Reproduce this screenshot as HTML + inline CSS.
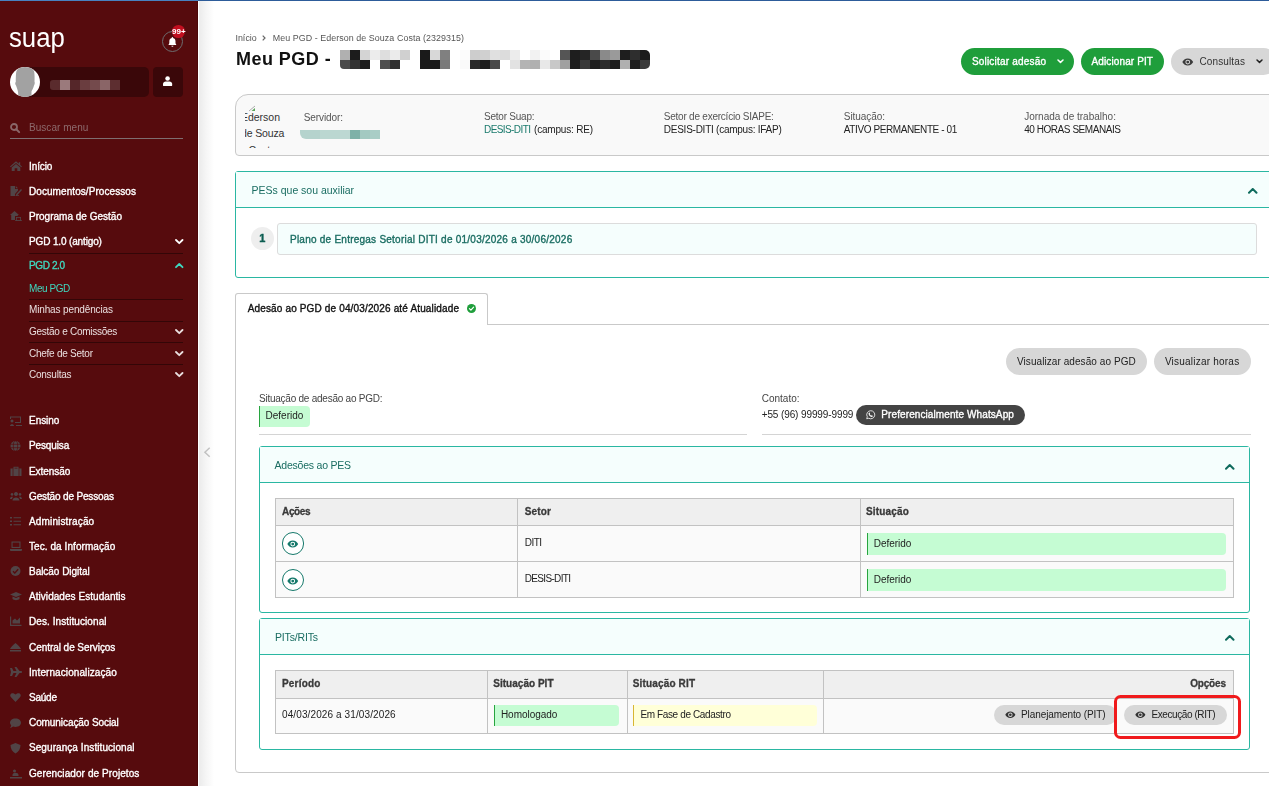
<!DOCTYPE html>
<html lang="pt-br">
<head>
<meta charset="utf-8">
<title>Meu PGD - SUAP</title>
<style>
*{box-sizing:border-box;margin:0;padding:0}
html,body{width:1269px;height:786px;overflow:hidden;background:#fff}
body{font-family:"Liberation Sans","DejaVu Sans",sans-serif;font-size:11px;color:#222;position:relative}
.a{position:absolute}
.t{position:absolute;white-space:nowrap;line-height:14px;z-index:5}
svg{position:absolute;overflow:visible}
#topline{left:0;top:0;width:1269px;height:1px;background:linear-gradient(to right,#4882c0 198px,#2d5c9a 198px);z-index:9}
#side{left:0;top:0;width:198px;height:786px;background:#560b0d;border-right:1px solid #4a0607}
#shadow{left:199px;top:0;width:15px;height:786px;background:linear-gradient(to right,#ebebeb,#f5f5f5 45%,#fff)}
.sep{position:absolute;left:29px;width:154px;height:1px;background:#330607}
.pill{position:absolute;border-radius:14px}
.panel{position:absolute;border:1px solid #2ab7a2;border-radius:3px;background:#fff}
.phead{position:absolute;left:0;top:0;right:0;background:#f5fefd;border-bottom:1px solid #2ab7a2}
.cell{position:absolute;border:1px solid #bdbdbd}
.st{position:absolute;border-radius:0 4px 4px 0}
#txt{position:absolute;left:0;top:0;width:1269px;height:786px;will-change:transform;z-index:5}

</style>
</head>
<body>
<div class="a" id="side"></div><div class="a" id="shadow"></div><div class="a" id="topline"></div>
<div class="a" style="left:162px;top:31px;width:21px;height:21px;border:1px solid #6d6e70;border-radius:50%"></div>
<svg style="left:167.700px;top:37px" width="8.800" height="9.900" viewBox="0 0 20 22"><path fill="#fff" d="M10 0c-.9 0-1.6.7-1.6 1.6v.7C5.300 3 3 5.800 3 9.200v3.600c0 1.400-.6 2.700-1.600 3.600-.5.500-.2 1.600.6 1.600h16c.8 0 1.100-1.100.6-1.600-1-.9-1.600-2.200-1.600-3.600V9.200c0-3.400-2.300-6.200-5.400-6.900v-.7C11.600.7 10.900 0 10 0zM7.600 19.500a2.400 2.400 0 0 0 4.800 0z"/></svg>
<div class="a" style="left:172.2px;top:25.2px;width:12.8px;height:12.8px;border-radius:50%;background:#c10f1f;z-index:3"></div>
<div class="a" style="left:22px;top:67px;width:127px;height:30px;background:#3a0709;border-radius:0 5px 5px 0"></div>
<div class="a" style="left:153px;top:67px;width:30px;height:30px;background:#3a0709;border-radius:4px"></div>
<div class="a" style="left:10px;top:67px;width:30px;height:30px;border-radius:50%;background:#fff;overflow:hidden"><svg style="left:0;top:0" width="30" height="30" viewBox="0 0 30 30"><path fill="#a2a2a2" d="M8.500 30 L8 25 C7.500 22 6.500 20 6 18.500 C5 17.500 5 15.500 5.800 15 C5.800 12 5.800 6 6.500 4 C8 1 11 0 15 0 C19 0 22.500 1 24 4 C24.800 7 24.600 12 24.500 14.500 C25 15.500 24.800 17.500 24 18.500 C23.500 21 22 23 21.500 24.500 L21.500 30 Z"/></svg></div>
<div class="a" style="left:50px;top:80px;width:10px;height:10px;background:#5a2b2d;border-radius:3px 0 0 3px"></div>
<div class="a" style="left:60px;top:80px;width:10px;height:10px;background:#9b7a7c;"></div>
<div class="a" style="left:70px;top:80px;width:10px;height:10px;background:#552629;"></div>
<div class="a" style="left:80px;top:80px;width:10px;height:10px;background:#6a3d3f;"></div>
<div class="a" style="left:90px;top:80px;width:10px;height:10px;background:#744a4c;"></div>
<div class="a" style="left:100px;top:80px;width:10px;height:10px;background:#8a6567;"></div>
<div class="a" style="left:110px;top:80px;width:10px;height:10px;background:#5d2e30;"></div>
<svg style="left:162.900px;top:76.300px" width="9.200" height="10.100" viewBox="0 0 20 22"><circle cx="10" cy="5.500" r="5" fill="#fff"/><path fill="#fff" d="M6 12h8c3.300 0 6 2.400 6 5.500V20c0 1.100-.9 2-2 2H2c-1.100 0-2-.9-2-2v-2.500C0 14.400 2.700 12 6 12z"/></svg>
<svg style="left:10px;top:122.5px" width="10" height="10" viewBox="0 0 20 20"><circle cx="8" cy="8" r="6" fill="none" stroke="#8a6668" stroke-width="3.600"/><line x1="12.500" y1="12.500" x2="18.300" y2="18.300" stroke="#8a6668" stroke-width="4" stroke-linecap="round"/></svg>
<div class="a" style="left:10px;top:138px;width:173px;height:1px;background:#7f6e70"></div>
<div class="sep" style="top:253px"></div>
<div class="sep" style="top:299px"></div>
<div class="sep" style="top:320.5px"></div>
<div class="sep" style="top:342px"></div>
<div class="sep" style="top:364px"></div>
<svg style="left:174.5px;top:239.2px;z-index:6" width="8.5" height="5.2"><polyline points="1,1 4.25,4.175000000000001 7.5,1" fill="none" stroke="#fff" stroke-width="1.8" stroke-linecap="round" stroke-linejoin="round"/></svg>
<svg style="left:174.5px;top:263.1px;z-index:6" width="8.5" height="5.2"><polyline points="1,4.175000000000001 4.25,1 7.5,4.175000000000001" fill="none" stroke="#3fd8bf" stroke-width="1.8" stroke-linecap="round" stroke-linejoin="round"/></svg>
<svg style="left:174.5px;top:328.9px;z-index:6" width="8.5" height="5.2"><polyline points="1,1 4.25,4.175000000000001 7.5,1" fill="none" stroke="#eadfdf" stroke-width="1.8" stroke-linecap="round" stroke-linejoin="round"/></svg>
<svg style="left:174.5px;top:350.7px;z-index:6" width="8.5" height="5.2"><polyline points="1,1 4.25,4.175000000000001 7.5,1" fill="none" stroke="#eadfdf" stroke-width="1.8" stroke-linecap="round" stroke-linejoin="round"/></svg>
<svg style="left:174.5px;top:372.1px;z-index:6" width="8.5" height="5.2"><polyline points="1,1 4.25,4.175000000000001 7.5,1" fill="none" stroke="#eadfdf" stroke-width="1.8" stroke-linecap="round" stroke-linejoin="round"/></svg>
<svg style="left:10px;top:161.0px" width="12" height="10.500" viewBox="0 0 12 10.500"><path fill="#514446" d="M6 0.300 L8.800 2.700 V1.200 H10.200 V3.900 L12 5.400 L11.300 6.300 L6 1.900 L0.700 6.300 L0 5.400 Z M6 3 L10.300 6.600 V10 H7.300 V7.200 H4.700 V10 H1.700 V6.600 Z"/></svg>
<svg style="left:10px;top:186.2px" width="12" height="10.500" viewBox="0 0 12 10.500"><path fill="#514446" d="M0.500 0 H5 V3 H8 V4.500 L5 8 V10 H0.500 Z M5.800 0 L8 2.200 H5.800 Z M11 3 L12 4 L7.500 9 L6 9.500 L6.300 8 Z M5.500 9.300 H9 V10 H5.500Z"/></svg>
<svg style="left:10px;top:211.4px" width="12" height="10.500" viewBox="0 0 12 10.500"><path fill="#514446" d="M4.500 0 L9 4 H7.800 V5 H5 V9 H1.200 V4 H0 Z M6 6 H11 V9.300 H12 V10 H5 V9.300 H6 Z"/><rect x="6.800" y="6.800" width="3.400" height="2.300" fill="#560b0d"/></svg>
<svg style="left:10px;top:415.6px" width="12" height="10.500" viewBox="0 0 12 10.500"><path fill="#514446" d="M0 0.500 H11 V7 H5 V6 H10 V1.500 H1 V3 H0 Z M2 3.500 a1.500 1.500 0 1 0 .01 0 Z M0 10 C0 7.500 4 7.500 4 10 Z M6 9 H12 V10 H6 Z"/></svg>
<svg style="left:10px;top:440.6px" width="12" height="10.500" viewBox="0 0 12 10.500"><circle cx="5.500" cy="5" r="5" fill="#514446"/><ellipse cx="5.500" cy="5" rx="2.200" ry="5" fill="none" stroke="#560b0d" stroke-width=".7"/><path d="M0.500 3.300H10.500M0.500 6.700H10.500" stroke="#560b0d" stroke-width=".7"/></svg>
<svg style="left:10px;top:465.7px" width="12" height="10.500" viewBox="0 0 12 10.500"><path fill="#514446" d="M0.500 2.500 H11.500 V10 H0.500 Z M3.500 2.500 V0.800 H8.500 V2.500 H7.500 V1.700 H4.500 V2.500 Z"/><path d="M3 2.500V10M9 2.500V10" stroke="#560b0d" stroke-width=".7"/></svg>
<svg style="left:10px;top:490.7px" width="12" height="10.500" viewBox="0 0 12 10.500"><path fill="#514446" d="M6 1 a2 2 0 1 0 .01 0 Z M2 2 a1.400 1.400 0 1 0 .01 0 Z M10 2 a1.400 1.400 0 1 0 .01 0 Z M2.500 9.500 C2.500 5.500 9.500 5.500 9.500 9.500 Z M0 8 C0 5.500 2.500 5.500 3 6 C2 7 2 8 2 8 Z M12 8 C12 5.500 9.500 5.500 9 6 C10 7 10 8 10 8 Z"/></svg>
<svg style="left:10px;top:516.2px" width="12" height="10.500" viewBox="0 0 12 10.500"><path fill="#514446" d="M0 1 H2 V2.500 H0 Z M0 4.500 H2 V6 H0 Z M0 8 H2 V9.500 H0 Z M3.500 1.200 H11 V2.300 H3.500 Z M3.500 4.700 H11 V5.800 H3.500 Z M3.500 8.200 H11 V9.300 H3.500 Z"/></svg>
<svg style="left:10px;top:541.3px" width="12" height="10.500" viewBox="0 0 12 10.500"><path fill="#514446" d="M1.500 0.500 H10.500 V7 H1.500 Z M0 8 H12 V9 C12 9.500 11.500 10 11 10 H1 C.5 10 0 9.500 0 9 Z"/><rect x="2.600" y="1.600" width="6.800" height="4.300" fill="#560b0d"/></svg>
<svg style="left:10px;top:566.3px" width="12" height="10.500" viewBox="0 0 12 10.500"><circle cx="5.500" cy="5" r="5" fill="#514446"/><polyline points="3,5.200 4.800,7 8.200,3.300" fill="none" stroke="#560b0d" stroke-width="1.300"/></svg>
<svg style="left:10px;top:591.3px" width="12" height="10.500" viewBox="0 0 12 10.500"><path fill="#514446" d="M6 1 L12 3.500 L6 6 L0 3.500 Z M2.500 5.500 L6 7 L9.500 5.500 V8 C8 9.500 4 9.500 2.500 8 Z"/></svg>
<svg style="left:10px;top:616.3px" width="12" height="10.500" viewBox="0 0 12 10.500"><path fill="#514446" d="M0 0.500 H1.200 V8.800 H11.500 V10 H0 Z M2.500 7.500 V4.500 L5 2.500 L7 4.500 L10 1.500 V7.500 Z"/></svg>
<svg style="left:10px;top:641.9px" width="12" height="10.500" viewBox="0 0 12 10.500"><path fill="#514446" d="M5.500 1 C8 3 10 5 11 7 H0 C1 5 3 3 5.500 1 Z M0 8 H11 V9.500 H0 Z"/></svg>
<svg style="left:10px;top:666.9px" width="12" height="10.500" viewBox="0 0 12 10.500"><path fill="#514446" d="M0 1 H2 L3.500 4 H6.500 L4.500 0 H6.500 L9.500 4 H11 C12.500 4 12.500 6 11 6 H9.500 L6.500 10 H4.500 L6.500 6 H3.500 L2 9 H0 L1 5 Z"/></svg>
<svg style="left:10px;top:692.4px" width="12" height="10.500" viewBox="0 0 12 10.500"><path fill="#514446" d="M5.500 10 L0.800 5 C-1 2.500 2 -0.500 5.500 2.500 C9 -0.500 12 2.500 10.200 5 Z"/></svg>
<svg style="left:10px;top:717.5px" width="12" height="10.500" viewBox="0 0 12 10.500"><path fill="#514446" d="M5.500 0.500 C9 0.500 11 2.500 11 4.800 C11 7 9 9 5.500 9 C4.500 9 3.800 8.900 3 8.600 C2 9.500 1 10 0 10 C.8 9 1.200 8 1.200 7.300 C.4 6.600 0 5.800 0 4.800 C0 2.500 2 0.500 5.500 0.500 Z"/></svg>
<svg style="left:10px;top:742.5px" width="12" height="10.500" viewBox="0 0 12 10.500"><path fill="#514446" d="M5.500 0 L10.500 2 C10.500 6 8.500 9 5.500 10.500 C2.500 9 0.500 6 0.500 2 Z"/></svg>
<svg style="left:10px;top:768.5px" width="12" height="10.500" viewBox="0 0 12 10.500"><path fill="#514446" d="M4.500 0.500 a1.500 1.500 0 1 0 .01 0 Z M2.500 6 C2.500 3 8.500 3 8.500 6 V7 H2.500 Z M0 8 H12 V9.500 H0 Z"/></svg>
<svg style="left:203.500px;top:447.400px" width="7" height="11"><polyline points="5.700,0.800 0.900,5.300 5.700,9.800" fill="none" stroke="#c2c2c2" stroke-width="1.500"/></svg>
<svg style="left:262px;top:35px" width="4" height="6"><polyline points="0.700,0.700 3,3 0.700,5.300" fill="none" stroke="#666" stroke-width="1.200"/></svg>
<div class="a" style="left:340.4px;top:49.800px;width:10px;height:9.900px;background:#b0b0b0;"></div>
<div class="a" style="left:350.4px;top:49.800px;width:10px;height:9.900px;background:#1c1c1c;"></div>
<div class="a" style="left:360.4px;top:49.800px;width:10px;height:9.900px;background:#d4d4d4;"></div>
<div class="a" style="left:370.4px;top:49.800px;width:10px;height:9.900px;background:#ececec;"></div>
<div class="a" style="left:380.4px;top:49.800px;width:10px;height:9.900px;background:#dedede;"></div>
<div class="a" style="left:390.4px;top:49.800px;width:10px;height:9.900px;background:#ebebeb;"></div>
<div class="a" style="left:400.4px;top:49.800px;width:10px;height:9.900px;background:#d0d0d0;"></div>
<div class="a" style="left:420.4px;top:49.800px;width:10px;height:9.900px;background:#1a1a1a;"></div>
<div class="a" style="left:430.4px;top:49.800px;width:10px;height:9.900px;background:#d8d8d8;"></div>
<div class="a" style="left:440.4px;top:49.800px;width:10px;height:9.900px;background:#808080;"></div>
<div class="a" style="left:460.4px;top:49.800px;width:10px;height:9.900px;background:#fcfcfc;"></div>
<div class="a" style="left:470.4px;top:49.800px;width:10px;height:9.900px;background:#cdcdcd;"></div>
<div class="a" style="left:480.4px;top:49.800px;width:10px;height:9.900px;background:#d0d0d0;"></div>
<div class="a" style="left:490.4px;top:49.800px;width:10px;height:9.900px;background:#e0e0e0;"></div>
<div class="a" style="left:500.4px;top:49.800px;width:10px;height:9.900px;background:#dcdcdc;"></div>
<div class="a" style="left:510.4px;top:49.800px;width:10px;height:9.900px;background:#ececec;"></div>
<div class="a" style="left:530.4px;top:49.800px;width:10px;height:9.900px;background:#f2f2f2;"></div>
<div class="a" style="left:540.4px;top:49.800px;width:10px;height:9.900px;background:#fbfbfb;"></div>
<div class="a" style="left:560.4px;top:49.800px;width:10px;height:9.900px;background:#555;"></div>
<div class="a" style="left:570.4px;top:49.800px;width:10px;height:9.900px;background:#1e1e1e;"></div>
<div class="a" style="left:580.4px;top:49.800px;width:10px;height:9.900px;background:#252525;"></div>
<div class="a" style="left:590.4px;top:49.800px;width:10px;height:9.900px;background:#4a4a4a;"></div>
<div class="a" style="left:600.4px;top:49.800px;width:10px;height:9.900px;background:#8a8a8a;"></div>
<div class="a" style="left:610.4px;top:49.800px;width:10px;height:9.900px;background:#9a9a9a;"></div>
<div class="a" style="left:620.4px;top:49.800px;width:10px;height:9.900px;background:#1e1e1e;"></div>
<div class="a" style="left:630.4px;top:49.800px;width:10px;height:9.900px;background:#2e2e2e;"></div>
<div class="a" style="left:640.4px;top:49.800px;width:10px;height:9.900px;background:#1c1c1c;border-radius:0 5px 0 0"></div>
<div class="a" style="left:340.4px;top:59.700px;width:10px;height:9.600px;background:#4a4a4a;border-radius:0 0 0 4px"></div>
<div class="a" style="left:350.4px;top:59.700px;width:10px;height:9.600px;background:#333;"></div>
<div class="a" style="left:360.4px;top:59.700px;width:10px;height:9.600px;background:#1c1c1c;"></div>
<div class="a" style="left:380.4px;top:59.700px;width:10px;height:9.600px;background:#4e4e4e;"></div>
<div class="a" style="left:390.4px;top:59.700px;width:10px;height:9.600px;background:#303030;"></div>
<div class="a" style="left:420.4px;top:59.700px;width:10px;height:9.600px;background:#1a1a1a;"></div>
<div class="a" style="left:430.4px;top:59.700px;width:10px;height:9.600px;background:#1a1a1a;"></div>
<div class="a" style="left:440.4px;top:59.700px;width:10px;height:9.600px;background:#7a7a7a;"></div>
<div class="a" style="left:460.4px;top:59.700px;width:10px;height:9.600px;background:#fafafa;"></div>
<div class="a" style="left:470.4px;top:59.700px;width:10px;height:9.600px;background:#2a2a2a;"></div>
<div class="a" style="left:480.4px;top:59.700px;width:10px;height:9.600px;background:#1c1c1c;"></div>
<div class="a" style="left:490.4px;top:59.700px;width:10px;height:9.600px;background:#4a4a4a;"></div>
<div class="a" style="left:510.4px;top:59.700px;width:10px;height:9.600px;background:#e2e2e2;"></div>
<div class="a" style="left:520.4px;top:59.700px;width:10px;height:9.600px;background:#b4b4b4;"></div>
<div class="a" style="left:530.4px;top:59.700px;width:10px;height:9.600px;background:#b0b0b0;"></div>
<div class="a" style="left:540.4px;top:59.700px;width:10px;height:9.600px;background:#e8e8e8;"></div>
<div class="a" style="left:550.4px;top:59.700px;width:10px;height:9.600px;background:#c8c8c8;"></div>
<div class="a" style="left:560.4px;top:59.700px;width:10px;height:9.600px;background:#a0a0a0;"></div>
<div class="a" style="left:570.4px;top:59.700px;width:10px;height:9.600px;background:#1c1c1c;"></div>
<div class="a" style="left:580.4px;top:59.700px;width:10px;height:9.600px;background:#3a3a3a;"></div>
<div class="a" style="left:590.4px;top:59.700px;width:10px;height:9.600px;background:#1e1e1e;"></div>
<div class="a" style="left:600.4px;top:59.700px;width:10px;height:9.600px;background:#2e2e2e;"></div>
<div class="a" style="left:610.4px;top:59.700px;width:10px;height:9.600px;background:#1c1c1c;"></div>
<div class="a" style="left:620.4px;top:59.700px;width:10px;height:9.600px;background:#b0b0b0;"></div>
<div class="a" style="left:630.4px;top:59.700px;width:10px;height:9.600px;background:#1e1e1e;"></div>
<div class="a" style="left:640.4px;top:59.700px;width:10px;height:9.600px;background:#3a3a3a;border-radius:0 0 5px 0"></div>
<div class="pill" style="left:960.5px;top:48px;width:113.500px;height:26.500px;background:#1f9e3b"></div>
<div class="pill" style="left:1081px;top:48px;width:83px;height:26.500px;background:#1f9e3b"></div>
<div class="pill" style="left:1171px;top:48px;width:105.500px;height:26.500px;background:#d7d7d7"></div>
<svg style="left:1057.3px;top:59.4px;z-index:6" width="7" height="4.4"><polyline points="1,1 3.5,3.3500000000000005 6,1" fill="none" stroke="#fff" stroke-width="1.5" stroke-linecap="round" stroke-linejoin="round"/></svg>
<svg style="left:1255.8px;top:59.4px;z-index:6" width="7" height="4.4"><polyline points="1,1 3.5,3.3500000000000005 6,1" fill="none" stroke="#222" stroke-width="1.5" stroke-linecap="round" stroke-linejoin="round"/></svg>
<svg style="left:1181.8px;top:56.7px;z-index:6" width="11.5" height="10.2" viewBox="0 0 576 512"><path fill="#3c3c3c" fill-rule="evenodd" d="M288 80C160 80 60 170 16 256c44 86 144 176 272 176s228-90 272-176C516 170 416 80 288 80zm0 296a120 120 0 1 1 0-240 120 120 0 0 1 0 240zm0-192a72 72 0 1 0 0 144 72 72 0 0 0 0-144z"/></svg>
<div class="a" style="left:235px;top:94px;width:1060px;height:61.500px;border:1px solid #c9c9c9;border-radius:13px 0 0 4px;background:#f9f9f9"></div>
<div class="a" style="left:244.500px;top:103px;width:42px;height:44.500px;overflow:hidden;font-size:10.500px;color:#333"><span class="a" style="left:-3.600px;top:7.300px;white-space:nowrap;font-size:10.500px;line-height:15.200px">Ederson</span><span class="a" style="left:-3.500px;top:22.500px;white-space:nowrap;font-size:10.500px;line-height:15.200px;letter-spacing:-.15px">de Souza</span><span class="a" style="left:4px;top:40px;white-space:nowrap;font-size:10.500px;line-height:15.200px">Costa</span><svg style="left:3px;top:2px" width="8" height="7"><path d="M1 6 L7 1" stroke="#999" stroke-width="0.800"/><path d="M3.500 6 L7 3 V6 Z" fill="#5aa55a"/></svg></div>
<div class="a" style="left:300px;top:130px;width:10px;height:9px;background:#b5d3cd;border-radius:0 0 0 6px"></div>
<div class="a" style="left:310px;top:130px;width:10px;height:9px;background:#b5d3cd;"></div>
<div class="a" style="left:320px;top:130px;width:10px;height:9px;background:#bbd7d1;"></div>
<div class="a" style="left:330px;top:130px;width:10px;height:9px;background:#bbd7d1;"></div>
<div class="a" style="left:340px;top:130px;width:10px;height:9px;background:#bdd8d3;"></div>
<div class="a" style="left:350px;top:130px;width:10px;height:9px;background:#7eb1a8;"></div>
<div class="a" style="left:360px;top:130px;width:10px;height:9px;background:#a3c9c1;"></div>
<div class="a" style="left:370px;top:130px;width:10px;height:9px;background:#a9cdc6;"></div>
<div class="panel" style="left:235px;top:171px;width:1060px;height:106.500px"><div class="phead" style="height:36px"></div></div>
<svg style="left:1248px;top:188.2px;z-index:6" width="9.5" height="5.7"><polyline points="1,4.7250000000000005 4.75,1 8.5,4.7250000000000005" fill="none" stroke="#0f6b5d" stroke-width="2" stroke-linecap="round" stroke-linejoin="round"/></svg>
<div class="a" style="left:250.800px;top:227.200px;width:23px;height:23px;border-radius:50%;background:#eee"></div>
<div class="a" style="left:277px;top:223px;width:979.500px;height:31.500px;border:1px solid #dcdcdc;border-radius:3px;background:#f5fefd"></div>
<div class="a" style="left:235px;top:323.500px;width:1060px;height:449px;border:1px solid #c9c9c9;border-radius:0 0 0 4px;background:#fff"></div>
<div class="a" style="left:235px;top:293px;width:253px;height:31.500px;border:1px solid #c9c9c9;border-bottom:0;border-radius:3px 3px 0 0;background:#fff"></div>
<svg style="left:466.500px;top:304.300px" width="9" height="9" viewBox="0 0 18 18"><circle cx="9" cy="9" r="9" fill="#1f9e3b"/><polyline points="4.800,9.300 7.800,12.200 13.200,6.300" fill="none" stroke="#fff" stroke-width="2.400" stroke-linecap="round" stroke-linejoin="round"/></svg>
<div class="pill" style="left:1006px;top:348px;width:140.500px;height:26.500px;background:#d7d7d7"></div>
<div class="pill" style="left:1153.500px;top:348px;width:97px;height:26.500px;background:#d7d7d7"></div>
<div class="a" style="left:259px;top:434px;width:488px;height:1px;background:#d4d4d4"></div>
<div class="a" style="left:761.500px;top:434px;width:489px;height:1px;background:#d4d4d4"></div>
<div class="st" style="left:259px;top:405.500px;width:51px;height:21px;background:#c5fcd3;border-left:1.500px solid #27a43f"></div>
<div class="pill" style="left:856px;top:405px;width:169px;height:20px;background:#444"></div>
<svg style="left:866.300px;top:410.300px" width="9.500" height="9.500" viewBox="0 0 20 20"><path d="M10 1.500a8.500 8.500 0 0 0-7.300 12.800L1.500 18.500l4.300-1.100A8.500 8.500 0 1 0 10 1.500z" fill="none" stroke="#fff" stroke-width="1.700"/><path fill="#fff" d="M7 5.500c.3 0 .6 0 .8.500l.7 1.700c.1.300 0 .5-.1.700l-.6.700c.7 1.300 1.700 2.300 3.100 3l.8-.9c.2-.2.400-.2.700-.1l1.600.8c.4.200.4.400.4.700 0 1-1 1.900-2 1.900-3 0-7-3.500-7-6.700 0-1.200.8-2.300 1.600-2.300z"/></svg>
<div class="panel" style="left:259px;top:446px;width:991px;height:167px"><div class="phead" style="height:36px"></div></div>
<svg style="left:1224.5px;top:463.9px;z-index:6" width="9.5" height="5.7"><polyline points="1,4.7250000000000005 4.75,1 8.5,4.7250000000000005" fill="none" stroke="#0f6b5d" stroke-width="2" stroke-linecap="round" stroke-linejoin="round"/></svg>
<div class="a" style="left:275px;top:498px;width:959px;height:27px;background:#efefef"></div><div class="a" style="left:275px;top:525px;width:959px;height:72px;background:#fafafa"></div><div class="a" style="left:275px;top:498px;width:959px;height:1px;background:#c2c2c2"></div><div class="a" style="left:275px;top:525px;width:959px;height:1px;background:#c2c2c2"></div><div class="a" style="left:275px;top:561px;width:959px;height:1px;background:#c2c2c2"></div><div class="a" style="left:275px;top:597px;width:959px;height:1px;background:#c2c2c2"></div><div class="a" style="left:275px;top:498px;width:1px;height:100px;background:#c2c2c2"></div><div class="a" style="left:517px;top:498px;width:1px;height:100px;background:#c2c2c2"></div><div class="a" style="left:859.5px;top:498px;width:1px;height:100px;background:#c2c2c2"></div><div class="a" style="left:1233px;top:498px;width:1px;height:100px;background:#c2c2c2"></div>
<div class="a" style="left:281.700px;top:532.2px;width:22.600px;height:22.600px;border:1.200px solid #16796b;border-radius:50%;background:#fff"></div>
<svg style="left:287.3px;top:539.1px;z-index:6" width="11.5" height="10.2" viewBox="0 0 576 512"><path fill="#16796b" fill-rule="evenodd" d="M288 80C160 80 60 170 16 256c44 86 144 176 272 176s228-90 272-176C516 170 416 80 288 80zm0 296a120 120 0 1 1 0-240 120 120 0 0 1 0 240zm0-192a72 72 0 1 0 0 144 72 72 0 0 0 0-144z"/></svg>
<div class="st" style="left:866.500px;top:533.0px;width:359.500px;height:21.500px;background:#c5fcd3;border-left:1.500px solid #27a43f"></div>
<div class="a" style="left:281.700px;top:568.6px;width:22.600px;height:22.600px;border:1.200px solid #16796b;border-radius:50%;background:#fff"></div>
<svg style="left:287.3px;top:575.5px;z-index:6" width="11.5" height="10.2" viewBox="0 0 576 512"><path fill="#16796b" fill-rule="evenodd" d="M288 80C160 80 60 170 16 256c44 86 144 176 272 176s228-90 272-176C516 170 416 80 288 80zm0 296a120 120 0 1 1 0-240 120 120 0 0 1 0 240zm0-192a72 72 0 1 0 0 144 72 72 0 0 0 0-144z"/></svg>
<div class="st" style="left:866.500px;top:569.4px;width:359.500px;height:21.500px;background:#c5fcd3;border-left:1.500px solid #27a43f"></div>
<div class="panel" style="left:259px;top:618px;width:991px;height:131.500px"><div class="phead" style="height:36px"></div></div>
<svg style="left:1224.5px;top:635.4px;z-index:6" width="9.5" height="5.7"><polyline points="1,4.7250000000000005 4.75,1 8.5,4.7250000000000005" fill="none" stroke="#0f6b5d" stroke-width="2" stroke-linecap="round" stroke-linejoin="round"/></svg>
<div class="a" style="left:275px;top:670px;width:959px;height:28px;background:#efefef"></div><div class="a" style="left:275px;top:698px;width:959px;height:35px;background:#fafafa"></div><div class="a" style="left:275px;top:670px;width:959px;height:1px;background:#c2c2c2"></div><div class="a" style="left:275px;top:698px;width:959px;height:1px;background:#c2c2c2"></div><div class="a" style="left:275px;top:733px;width:959px;height:1px;background:#c2c2c2"></div><div class="a" style="left:275px;top:670px;width:1px;height:64px;background:#c2c2c2"></div><div class="a" style="left:486.5px;top:670px;width:1px;height:64px;background:#c2c2c2"></div><div class="a" style="left:626.5px;top:670px;width:1px;height:64px;background:#c2c2c2"></div><div class="a" style="left:823px;top:670px;width:1px;height:64px;background:#c2c2c2"></div><div class="a" style="left:1233px;top:670px;width:1px;height:64px;background:#c2c2c2"></div>
<div class="st" style="left:493.500px;top:705px;width:125px;height:20.500px;background:#c5fcd3;border-left:1.500px solid #27a43f"></div>
<div class="st" style="left:632.500px;top:705px;width:184px;height:20.500px;background:#ffffd8;border-left:1.500px solid #d8b534"></div>
<div class="pill" style="left:994px;top:705px;width:122.500px;height:20px;background:#d7d7d7"></div>
<div class="pill" style="left:1124px;top:705px;width:103px;height:20px;background:#d7d7d7"></div>
<svg style="left:1004.6px;top:710.0px;z-index:6" width="10.7" height="9.5" viewBox="0 0 576 512"><path fill="#333" fill-rule="evenodd" d="M288 80C160 80 60 170 16 256c44 86 144 176 272 176s228-90 272-176C516 170 416 80 288 80zm0 296a120 120 0 1 1 0-240 120 120 0 0 1 0 240zm0-192a72 72 0 1 0 0 144 72 72 0 0 0 0-144z"/></svg>
<svg style="left:1134.9px;top:710.0px;z-index:6" width="10.7" height="9.5" viewBox="0 0 576 512"><path fill="#333" fill-rule="evenodd" d="M288 80C160 80 60 170 16 256c44 86 144 176 272 176s228-90 272-176C516 170 416 80 288 80zm0 296a120 120 0 1 1 0-240 120 120 0 0 1 0 240zm0-192a72 72 0 1 0 0 144 72 72 0 0 0 0-144z"/></svg>
<div class="a" style="left:1113.800px;top:695.200px;width:127.700px;height:43.400px;border:3.300px solid #f01a1c;border-radius:6.500px;z-index:7"></div>
<div id="txt">
<span class="t" style="left:9.2px;top:21.0px;font-size:27px;color:#fff;line-height:34px;transform:scaleX(0.953);transform-origin:0 0;">suap</span>
<span class="t" style="left:172px;top:25.3px;font-size:8px;color:#fff;font-weight:700;letter-spacing:0.11px;">99+</span>
<span class="t" style="left:29px;top:120.5px;font-size:10px;color:#8d6a6c;letter-spacing:0.04px;">Buscar menu</span>
<span class="t" style="left:29px;top:159.8px;font-size:10px;color:#fff;letter-spacing:-0.1px;-webkit-text-stroke:.35px #fff;">Início</span>
<span class="t" style="left:29px;top:185.0px;font-size:10px;color:#fff;letter-spacing:0.07px;-webkit-text-stroke:.35px #fff;">Documentos/Processos</span>
<span class="t" style="left:29px;top:210.2px;font-size:10px;color:#fff;letter-spacing:0.01px;-webkit-text-stroke:.35px #fff;">Programa de Gestão</span>
<span class="t" style="left:29px;top:235.3px;font-size:10px;color:#fff;letter-spacing:-0.14px;-webkit-text-stroke:.35px #fff;">PGD 1.0 (antigo)</span>
<span class="t" style="left:29px;top:259.2px;font-size:10px;color:#3fd8bf;letter-spacing:-0.39px;-webkit-text-stroke:.35px #3fd8bf;">PGD 2.0</span>
<span class="t" style="left:29px;top:282.4px;font-size:10px;color:#3fd8bf;letter-spacing:-0.45px;">Meu PGD</span>
<span class="t" style="left:29px;top:303.0px;font-size:10px;color:#eadfdf;letter-spacing:-0.14px;">Minhas pendências</span>
<span class="t" style="left:29px;top:325.0px;font-size:10px;color:#eadfdf;letter-spacing:-0.27px;">Gestão e Comissões</span>
<span class="t" style="left:29px;top:346.8px;font-size:10px;color:#eadfdf;letter-spacing:-0.25px;">Chefe de Setor</span>
<span class="t" style="left:29px;top:368.2px;font-size:10px;color:#eadfdf;letter-spacing:-0.25px;">Consultas</span>
<span class="t" style="left:29px;top:414.4px;font-size:10px;color:#fff;letter-spacing:-0.04px;-webkit-text-stroke:.35px #fff;">Ensino</span>
<span class="t" style="left:29px;top:439.4px;font-size:10px;color:#fff;letter-spacing:-0.13px;-webkit-text-stroke:.35px #fff;">Pesquisa</span>
<span class="t" style="left:29px;top:464.5px;font-size:10px;color:#fff;letter-spacing:-0.07px;-webkit-text-stroke:.35px #fff;">Extensão</span>
<span class="t" style="left:29px;top:489.5px;font-size:10px;color:#fff;letter-spacing:-0.15px;-webkit-text-stroke:.35px #fff;">Gestão de Pessoas</span>
<span class="t" style="left:29px;top:515.0px;font-size:10px;color:#fff;letter-spacing:0.15px;-webkit-text-stroke:.35px #fff;">Administração</span>
<span class="t" style="left:29px;top:540.1px;font-size:10px;color:#fff;letter-spacing:0.07px;-webkit-text-stroke:.35px #fff;">Tec. da Informação</span>
<span class="t" style="left:29px;top:565.1px;font-size:10px;color:#fff;letter-spacing:-0.03px;-webkit-text-stroke:.35px #fff;">Balcão Digital</span>
<span class="t" style="left:29px;top:590.1px;font-size:10px;color:#fff;letter-spacing:0.05px;-webkit-text-stroke:.35px #fff;">Atividades Estudantis</span>
<span class="t" style="left:29px;top:615.1px;font-size:10px;color:#fff;letter-spacing:0.08px;-webkit-text-stroke:.35px #fff;">Des. Institucional</span>
<span class="t" style="left:29px;top:640.7px;font-size:10px;color:#fff;letter-spacing:-0.05px;-webkit-text-stroke:.35px #fff;">Central de Serviços</span>
<span class="t" style="left:29px;top:665.7px;font-size:10px;color:#fff;letter-spacing:0.09px;-webkit-text-stroke:.35px #fff;">Internacionalização</span>
<span class="t" style="left:29px;top:691.2px;font-size:10px;color:#fff;letter-spacing:-0.23px;-webkit-text-stroke:.35px #fff;">Saúde</span>
<span class="t" style="left:29px;top:716.3px;font-size:10px;color:#fff;letter-spacing:-0.08px;-webkit-text-stroke:.35px #fff;">Comunicação Social</span>
<span class="t" style="left:29px;top:741.3px;font-size:10px;color:#fff;letter-spacing:0.07px;-webkit-text-stroke:.35px #fff;">Segurança Institucional</span>
<span class="t" style="left:29px;top:767.3px;font-size:10px;color:#fff;letter-spacing:0.09px;-webkit-text-stroke:.35px #fff;">Gerenciador de Projetos</span>
<span class="t" style="left:235.4px;top:30.5px;font-size:8.9px;color:#555;letter-spacing:0.04px;">Início</span>
<span class="t" style="left:272.7px;top:30.5px;font-size:8.9px;color:#555;letter-spacing:0.07px;">Meu PGD - Ederson de Souza Costa (2329315)</span>
<span class="t" style="left:236px;top:47.2px;font-size:18px;color:#111;line-height:24px;font-weight:700;letter-spacing:0.46px;">Meu PGD -</span>
<span class="t" style="left:971.9px;top:55.0px;font-size:10px;color:#fff;letter-spacing:0.2px;-webkit-text-stroke:.35px #fff;">Solicitar adesão</span>
<span class="t" style="left:1091.5px;top:55.0px;font-size:10px;color:#fff;letter-spacing:0.12px;-webkit-text-stroke:.35px #fff;">Adicionar PIT</span>
<span class="t" style="left:1199.4px;top:55.0px;font-size:10px;color:#333;letter-spacing:0.13px;">Consultas</span>
<span class="t" style="left:303.7px;top:110.5px;font-size:10px;color:#555;letter-spacing:-0.09px;">Servidor:</span>
<span class="t" style="left:484px;top:109.5px;font-size:10px;color:#555;letter-spacing:-0.23px;">Setor Suap:</span>
<span class="t" style="left:484px;top:123.0px;font-size:10px;color:#1a7a6c;letter-spacing:-0.58px;">DESIS-DITI</span>
<span class="t" style="left:534px;top:123.0px;font-size:10px;color:#222;letter-spacing:-0.19px;">(campus: RE)</span>
<span class="t" style="left:663.8px;top:109.5px;font-size:10px;color:#555;letter-spacing:-0.23px;">Setor de exercício SIAPE:</span>
<span class="t" style="left:663.8px;top:123.0px;font-size:10px;color:#222;letter-spacing:-0.25px;">DESIS-DITI (campus: IFAP)</span>
<span class="t" style="left:843.8px;top:109.5px;font-size:10px;color:#555;letter-spacing:-0.06px;">Situação:</span>
<span class="t" style="left:843.8px;top:123.0px;font-size:10px;color:#222;letter-spacing:-0.4px;">ATIVO PERMANENTE - 01</span>
<span class="t" style="left:1024.2px;top:109.5px;font-size:10px;color:#555;">Jornada de trabalho:</span>
<span class="t" style="left:1024.2px;top:123.0px;font-size:10px;color:#222;letter-spacing:-0.45px;">40 HORAS SEMANAIS</span>
<span class="t" style="left:251.6px;top:182.6px;font-size:10.5px;color:#1a6d62;letter-spacing:-0.01px;">PESs que sou auxiliar</span>
<span class="t" style="left:259.2px;top:231.1px;font-size:11px;color:#0e5e52;font-weight:700;-webkit-text-stroke:.4px #0e5e52;">1</span>
<span class="t" style="left:290px;top:233.0px;font-size:10px;color:#1a6d62;letter-spacing:0.24px;-webkit-text-stroke:.35px #1a6d62;">Plano de Entregas Setorial DITI de 01/03/2026 a 30/06/2026</span>
<span class="t" style="left:247.7px;top:301.8px;font-size:10px;color:#111;letter-spacing:0.15px;-webkit-text-stroke:.35px #111;">Adesão ao PGD de 04/03/2026 até Atualidade</span>
<span class="t" style="left:1017px;top:355.0px;font-size:10px;color:#222;letter-spacing:0.07px;">Visualizar adesão ao PGD</span>
<span class="t" style="left:1164.9px;top:355.0px;font-size:10px;color:#222;letter-spacing:0.22px;">Visualizar horas</span>
<span class="t" style="left:259px;top:391.5px;font-size:10px;color:#444;letter-spacing:-0.24px;">Situação de adesão ao PGD:</span>
<span class="t" style="left:265.5px;top:409.0px;font-size:10px;color:#222;letter-spacing:0.01px;">Deferido</span>
<span class="t" style="left:761.7px;top:391.5px;font-size:10px;color:#444;letter-spacing:0.01px;">Contato:</span>
<span class="t" style="left:761.7px;top:408.0px;font-size:10px;color:#222;letter-spacing:-0.11px;">+55 (96) 99999-9999</span>
<span class="t" style="left:881.3px;top:408.0px;font-size:10px;color:#fff;letter-spacing:0.1px;-webkit-text-stroke:.35px #fff;">Preferencialmente WhatsApp</span>
<span class="t" style="left:274.5px;top:458.3px;font-size:10.5px;color:#1a6d62;letter-spacing:-0.22px;">Adesões ao PES</span>
<span class="t" style="left:282.1px;top:504.5px;font-size:10px;color:#3a3a3a;font-weight:700;letter-spacing:-0.38px;-webkit-text-stroke:.3px #3a3a3a;">Ações</span>
<span class="t" style="left:524.7px;top:504.5px;font-size:10px;color:#3a3a3a;font-weight:700;letter-spacing:0.18px;-webkit-text-stroke:.3px #3a3a3a;">Setor</span>
<span class="t" style="left:865.9px;top:504.5px;font-size:10px;color:#3a3a3a;font-weight:700;letter-spacing:0.17px;-webkit-text-stroke:.3px #3a3a3a;">Situação</span>
<span class="t" style="left:524.7px;top:535.8px;font-size:10px;color:#222;letter-spacing:-0.53px;">DITI</span>
<span class="t" style="left:524.7px;top:572.0px;font-size:10px;color:#222;letter-spacing:-0.66px;">DESIS-DITI</span>
<span class="t" style="left:873.8px;top:536.8px;font-size:10px;color:#222;letter-spacing:-0.04px;">Deferido</span>
<span class="t" style="left:873.8px;top:573.0px;font-size:10px;color:#222;letter-spacing:-0.04px;">Deferido</span>
<span class="t" style="left:274.9px;top:629.7px;font-size:10.5px;color:#1a6d62;letter-spacing:-0.14px;">PITs/RITs</span>
<span class="t" style="left:282px;top:676.8px;font-size:10px;color:#3a3a3a;font-weight:700;letter-spacing:0.19px;-webkit-text-stroke:.3px #3a3a3a;">Período</span>
<span class="t" style="left:493.2px;top:676.8px;font-size:10px;color:#3a3a3a;font-weight:700;letter-spacing:0.03px;-webkit-text-stroke:.3px #3a3a3a;">Situação PIT</span>
<span class="t" style="left:632.8px;top:676.8px;font-size:10px;color:#3a3a3a;font-weight:700;letter-spacing:0.15px;-webkit-text-stroke:.3px #3a3a3a;">Situação RIT</span>
<span class="t" style="left:1190.2px;top:676.8px;font-size:10px;color:#3a3a3a;font-weight:700;letter-spacing:-0.18px;-webkit-text-stroke:.3px #3a3a3a;">Opções</span>
<span class="t" style="left:282px;top:707.8px;font-size:10px;color:#222;letter-spacing:0.11px;">04/03/2026 a 31/03/2026</span>
<span class="t" style="left:500.9px;top:708.0px;font-size:10px;color:#222;letter-spacing:-0.02px;">Homologado</span>
<span class="t" style="left:640.4px;top:708.0px;font-size:10px;color:#222;letter-spacing:-0.37px;">Em Fase de Cadastro</span>
<span class="t" style="left:1021px;top:708.0px;font-size:10px;color:#222;letter-spacing:-0.09px;">Planejamento (PIT)</span>
<span class="t" style="left:1151.4px;top:708.0px;font-size:10px;color:#222;letter-spacing:-0.41px;">Execução (RIT)</span>
</div>
</body>
</html>
